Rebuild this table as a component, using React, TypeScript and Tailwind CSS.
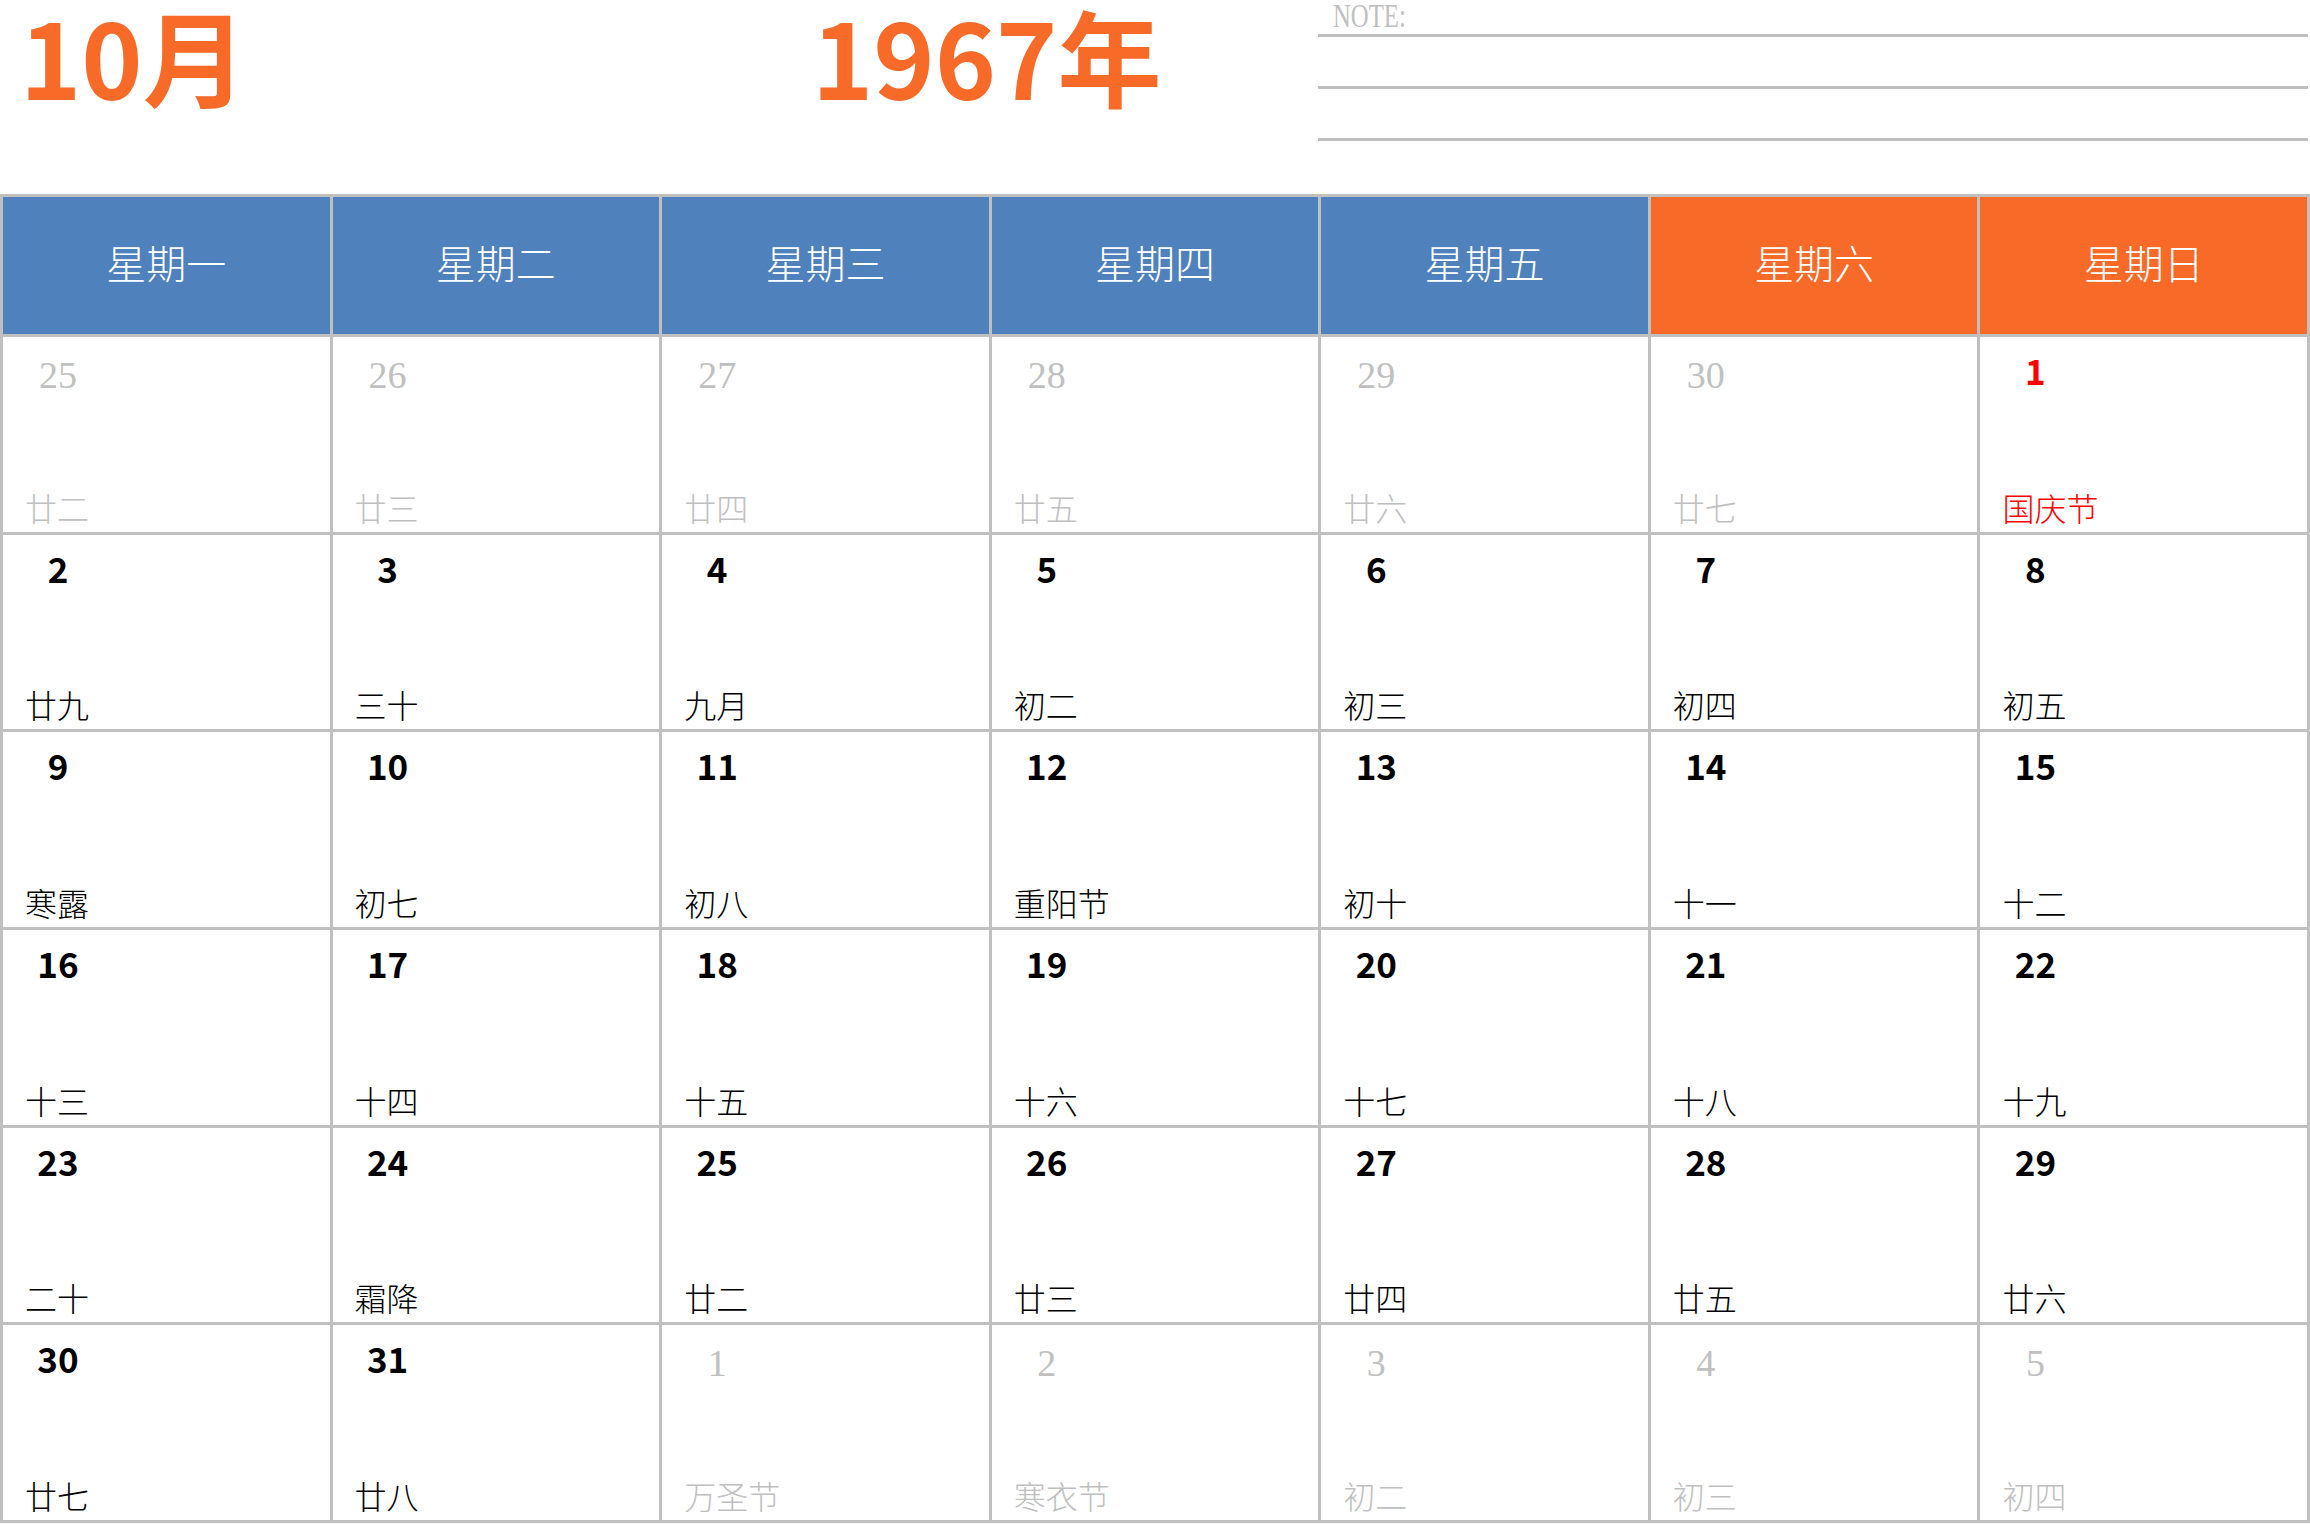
type Day = { d: number; l: string; t?: "off" | "red" };

const header = ["星期一", "星期二", "星期三", "星期四", "星期五", "星期六", "星期日"];

const rows: Day[][] = [
  [
    { d: 25, l: "廿二", t: "off" },
    { d: 26, l: "廿三", t: "off" },
    { d: 27, l: "廿四", t: "off" },
    { d: 28, l: "廿五", t: "off" },
    { d: 29, l: "廿六", t: "off" },
    { d: 30, l: "廿七", t: "off" },
    { d: 1, l: "国庆节", t: "red" },
  ],
  [
    { d: 2, l: "廿九" },
    { d: 3, l: "三十" },
    { d: 4, l: "九月" },
    { d: 5, l: "初二" },
    { d: 6, l: "初三" },
    { d: 7, l: "初四" },
    { d: 8, l: "初五" },
  ],
  [
    { d: 9, l: "寒露" },
    { d: 10, l: "初七" },
    { d: 11, l: "初八" },
    { d: 12, l: "重阳节" },
    { d: 13, l: "初十" },
    { d: 14, l: "十一" },
    { d: 15, l: "十二" },
  ],
  [
    { d: 16, l: "十三" },
    { d: 17, l: "十四" },
    { d: 18, l: "十五" },
    { d: 19, l: "十六" },
    { d: 20, l: "十七" },
    { d: 21, l: "十八" },
    { d: 22, l: "十九" },
  ],
  [
    { d: 23, l: "二十" },
    { d: 24, l: "霜降" },
    { d: 25, l: "廿二" },
    { d: 26, l: "廿三" },
    { d: 27, l: "廿四" },
    { d: 28, l: "廿五" },
    { d: 29, l: "廿六" },
  ],
  [
    { d: 30, l: "廿七" },
    { d: 31, l: "廿八" },
    { d: 1, l: "万圣节", t: "off" },
    { d: 2, l: "寒衣节", t: "off" },
    { d: 3, l: "初二", t: "off" },
    { d: 4, l: "初三", t: "off" },
    { d: 5, l: "初四", t: "off" },
  ],
];

function Cell({ day }: { day: Day }) {
  const off = day.t === "off";
  const red = day.t === "red";
  return (
    <div className="flex flex-col justify-between bg-white">
      {off ? (
        <div className="ml-[20px] w-[70px] pt-[19px] text-center font-['Liberation_Serif',serif] text-[38px] leading-none text-[#c0c0c0]">
          {day.d}
        </div>
      ) : (
        <div
          className={
            red
              ? "ml-[20px] w-[70px] pt-[15px] text-center font-['Noto_Sans_CJK_SC',sans-serif] text-[35px] font-bold leading-none text-[#ff0000]"
              : "ml-[20px] w-[70px] pt-[15px] text-center font-['Noto_Sans_CJK_SC',sans-serif] text-[35px] font-bold leading-none text-black"
          }
        >
          {day.d}
        </div>
      )}
      <div
        className={
          off
            ? "pl-[22px] pb-[6px] font-['Liberation_Serif','Noto_Sans_CJK_SC',serif] text-[32px] font-light leading-none text-[#c0c0c0]"
            : red
            ? "pl-[22px] pb-[6px] font-['Liberation_Serif','Noto_Sans_CJK_SC',serif] text-[32px] font-light leading-none text-[#ff0000]"
            : "pl-[22px] pb-[6px] font-['Liberation_Serif','Noto_Sans_CJK_SC',serif] text-[32px] font-light leading-none text-black"
        }
      >
        {day.l}
      </div>
    </div>
  );
}

export default function App() {
  return (
    <div className="h-[1524px] w-[2310px] overflow-hidden bg-white">
      {/* title + notes */}
      <div className="flex h-[194px]">
        <div className="w-[812px] pl-[20px] font-['Noto_Sans_CJK_SC',sans-serif] text-[104px] font-bold leading-[110px] text-[#f76a28]">
          10月
        </div>
        <div className="w-[506px] font-['Noto_Sans_CJK_SC',sans-serif] text-[104px] font-bold leading-[110px] text-[#f76a28]">
          1967年
        </div>
        <div className="flex-1 pr-[2px]">
          <div className="h-[34px] pl-[15px] font-['Liberation_Serif',serif] text-[33px] leading-[33px] text-[#c0c0c0]">
            <span className="inline-block origin-left scale-x-75">NOTE:</span>
          </div>
          <div className="h-[3px] bg-[#bfbfbf]" />
          <div className="h-[49px]" />
          <div className="h-[3px] bg-[#bfbfbf]" />
          <div className="h-[49px]" />
          <div className="h-[3px] bg-[#bfbfbf]" />
        </div>
      </div>

      {/* calendar grid */}
      <div className="grid h-[1329px] grid-cols-7 grid-rows-[137px_repeat(6,1fr)] gap-[3px] bg-[#c0c0c0] p-[3px]">
        {header.map((h, i) => (
          <div
            key={h}
            className={
              i < 5
                ? "flex items-center justify-center bg-[#4f81bd] font-['Liberation_Serif','Noto_Sans_CJK_SC',serif] text-[40px] font-light text-white"
                : "flex items-center justify-center bg-[#f76a28] font-['Liberation_Serif','Noto_Sans_CJK_SC',serif] text-[40px] font-light text-white"
            }
          >
            {h}
          </div>
        ))}
        {rows.flat().map((day, i) => (
          <Cell key={i} day={day} />
        ))}
      </div>
    </div>
  );
}
